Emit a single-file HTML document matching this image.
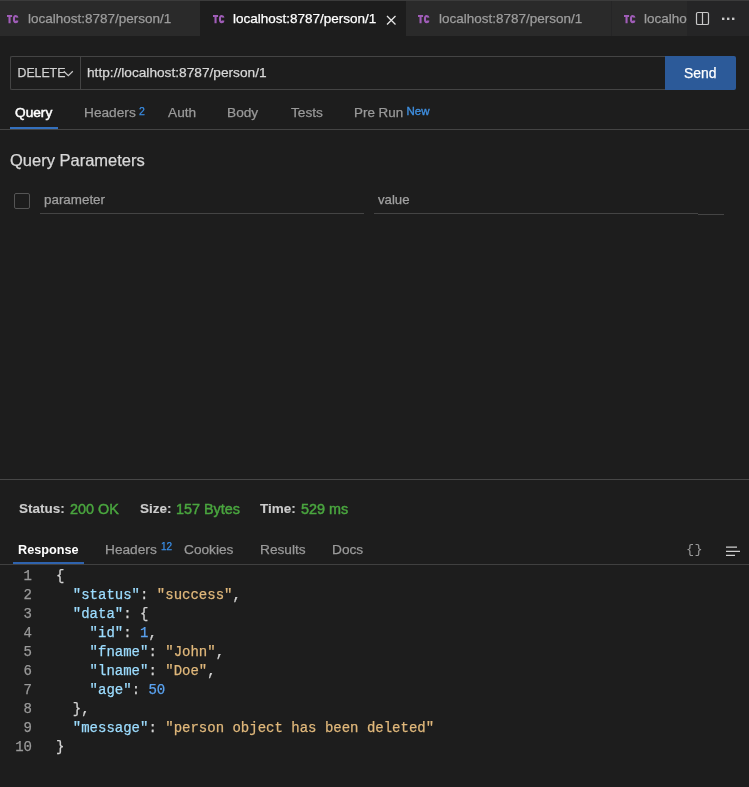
<!DOCTYPE html>
<html><head><meta charset="utf-8">
<style>
*{margin:0;padding:0;box-sizing:border-box}
html,body{width:749px;height:787px;overflow:hidden;background:#1d1d1d;font-family:"Liberation Sans",sans-serif;}
#root{position:absolute;left:0;top:0;width:749px;height:787px;will-change:transform}
#root span{-webkit-text-stroke:0.25px currentColor}
.code span{-webkit-text-stroke:0.3px currentColor}
#root .st{-webkit-text-stroke:0.45px currentColor}
.a{position:absolute;white-space:nowrap}
#tabbar{position:absolute;left:0;top:0;width:749px;height:36px;background:#252526}
#topline{position:absolute;left:0;top:0;width:749px;height:1px;background:#3b3b3b}
.tab{position:absolute;top:1px;height:35px;background:#2a2a2a;overflow:hidden}
.tab.act{background:#1d1d1d;height:36px}
.tcs{position:absolute;top:14px}
.tc{position:absolute;top:13px;font-weight:bold;font-size:11px;line-height:11px;color:#a25ec2;transform:scaleX(0.8);transform-origin:0 0;letter-spacing:0px}
.tt{position:absolute;top:10px;font-size:13.5px;line-height:16px;color:#9d9d9d}
.act .tt{color:#ffffff}
.rt{position:absolute;font-size:13.7px;line-height:16px;color:#9a9a9a;top:105px}
.sup{position:absolute;font-size:10px;line-height:11px;color:#3a8ee6}
.st{position:absolute;top:501px;font-size:14.4px;line-height:16px;color:#cccccc}
.gv{color:#4aa63f}
.code{position:absolute;left:0;top:567px;font-family:"Liberation Mono",monospace;font-size:14px;line-height:19px}
.ln{position:absolute;left:0;width:32px;text-align:right;color:#9a9a9a}
.cl{position:absolute;left:56px;color:#d4d4d4;white-space:pre}
.k{color:#9cdcfe}.s{color:#e0b87b}.n{color:#5aa2f0}
</style></head><body><div id="root">
<div id="tabbar">
  <div class="tab" style="left:0;width:200px"><svg class="tcs" style="left:7px" width="13" height="9" viewBox="0 0 13 9"><path d="M0 0H5.1V2H3.6V8.2H1.5V2H0Z" fill="#a05db8"/><path d="M10.5 2.7C10.3 1.5 9.7 1.05 8.7 1.05C7.5 1.05 6.95 2 6.95 4.1C6.95 6.2 7.5 7.15 8.7 7.15C9.7 7.15 10.3 6.7 10.5 5.5" fill="none" stroke="#a05db8" stroke-width="2.1"/></svg><span class="tt" style="left:28px">localhost:8787/person/1</span></div>
  <div class="tab act" style="left:200px;width:206px"><svg class="tcs" style="left:13px" width="13" height="9" viewBox="0 0 13 9"><path d="M0 0H5.1V2H3.6V8.2H1.5V2H0Z" fill="#a05db8"/><path d="M10.5 2.7C10.3 1.5 9.7 1.05 8.7 1.05C7.5 1.05 6.95 2 6.95 4.1C6.95 6.2 7.5 7.15 8.7 7.15C9.7 7.15 10.3 6.7 10.5 5.5" fill="none" stroke="#a05db8" stroke-width="2.1"/></svg><span class="tt" style="left:33px">localhost:8787/person/1</span>
    <svg class="a" style="left:186px;top:14px" width="11" height="10" viewBox="0 0 11 10"><path d="M1 1L9.5 9.5M9.5 1L1 9.5" stroke="#e6e6e6" stroke-width="1.3"/></svg></div>
  <div class="tab" style="left:406px;width:205px"><svg class="tcs" style="left:12px" width="13" height="9" viewBox="0 0 13 9"><path d="M0 0H5.1V2H3.6V8.2H1.5V2H0Z" fill="#a05db8"/><path d="M10.5 2.7C10.3 1.5 9.7 1.05 8.7 1.05C7.5 1.05 6.95 2 6.95 4.1C6.95 6.2 7.5 7.15 8.7 7.15C9.7 7.15 10.3 6.7 10.5 5.5" fill="none" stroke="#a05db8" stroke-width="2.1"/></svg><span class="tt" style="left:33px">localhost:8787/person/1</span></div>
  <div class="tab" style="left:612px;width:75px"><svg class="tcs" style="left:12px" width="13" height="9" viewBox="0 0 13 9"><path d="M0 0H5.1V2H3.6V8.2H1.5V2H0Z" fill="#a05db8"/><path d="M10.5 2.7C10.3 1.5 9.7 1.05 8.7 1.05C7.5 1.05 6.95 2 6.95 4.1C6.95 6.2 7.5 7.15 8.7 7.15C9.7 7.15 10.3 6.7 10.5 5.5" fill="none" stroke="#a05db8" stroke-width="2.1"/></svg><span class="tt" style="left:32px">localhost:8787/person/1</span></div>
  <svg class="a" style="left:695px;top:11px" width="15" height="15" viewBox="0 0 15 15"><rect x="1.5" y="1.5" width="12" height="12" rx="1.3" fill="none" stroke="#c8c8c8" stroke-width="1.2"/><path d="M7.5 1.5V13.5" stroke="#c8c8c8" stroke-width="1.2"/></svg>
  <svg class="a" style="left:721px;top:16px" width="14" height="5" viewBox="0 0 14 5"><rect x="1" y="1.6" width="2.4" height="2.4" fill="#c8c8c8"/><rect x="6" y="1.6" width="2.4" height="2.4" fill="#c8c8c8"/><rect x="11" y="1.6" width="2.4" height="2.4" fill="#c8c8c8"/></svg>
</div>
<div id="topline"></div>

<!-- URL bar -->
<div class="a" style="left:10px;top:56px;width:656px;height:34px;border:1px solid #444;border-right:none;border-radius:2px 0 0 2px"></div>
<div class="a" style="left:80px;top:56px;width:1px;height:34px;background:#444"></div>
<span class="a" style="left:17.5px;top:66px;font-size:12.3px;line-height:15px;color:#d0d0d0">DELETE</span>
<svg class="a" style="left:63px;top:70px" width="11" height="7" viewBox="0 0 11 7"><path d="M0.8 1.2L5.3 5.7L9.8 1.2" fill="none" stroke="#c8c8c8" stroke-width="1.25"/></svg>
<span class="a" style="left:87px;top:65px;font-size:13.7px;line-height:16px;color:#d8d8d8">http://localhost:8787/person/1</span>
<div class="a" style="left:665px;top:56px;width:71px;height:34px;background:#2c5a99;border-radius:0 2px 2px 0"></div>
<span class="a" style="left:684px;top:65px;font-size:13.9px;line-height:16px;color:#ffffff">Send</span>

<!-- request tabs -->
<span class="rt" style="left:15px;color:#ffffff;-webkit-text-stroke:0.5px #fff">Query</span>
<span class="rt" style="left:84px">Headers</span><span class="sup" style="left:139px;top:105.5px;font-size:10.5px">2</span>
<span class="rt" style="left:168px">Auth</span>
<span class="rt" style="left:227px">Body</span>
<span class="rt" style="left:291px">Tests</span>
<span class="rt" style="left:354px;font-size:13.4px">Pre Run</span><span class="sup" style="left:406.5px;top:105.5px;font-size:11.5px;color:#3f8fe0;-webkit-text-stroke:0.35px #3f8fe0">New</span>
<div class="a" style="left:0;top:129px;width:749px;height:1px;background:#444"></div>
<div class="a" style="left:10px;top:127px;width:48px;height:2px;background:#3470bd"></div>

<span class="a" style="left:10px;top:151px;font-size:16.5px;line-height:19px;color:#d8d8d8">Query Parameters</span>
<div class="a" style="left:14px;top:193px;width:16px;height:16px;border:1px solid #555;border-radius:2px"></div>
<span class="a" style="left:44px;top:192px;font-size:13.4px;line-height:16px;color:#a0a0a0">parameter</span>
<div class="a" style="left:40px;top:213px;width:324px;height:1px;background:#444"></div>
<span class="a" style="left:378px;top:192px;font-size:13.2px;line-height:16px;color:#a0a0a0">value</span>
<div class="a" style="left:374px;top:213px;width:324px;height:1px;background:#444"></div>
<div class="a" style="left:698px;top:214px;width:26px;height:1px;background:#444"></div>

<!-- response -->
<div class="a" style="left:0;top:479px;width:749px;height:1px;background:#474747"></div>
<span class="st" style="left:19px;font-weight:bold;font-size:13.5px;-webkit-text-stroke:0.1px #ccc">Status:</span><span class="st gv" style="left:70px">200 OK</span>
<span class="st" style="left:140px;font-weight:bold;font-size:13.5px;-webkit-text-stroke:0.1px #ccc">Size:</span><span class="st gv" style="left:176px">157 Bytes</span>
<span class="st" style="left:260px;font-weight:bold;font-size:13.5px;-webkit-text-stroke:0.1px #ccc">Time:</span><span class="st gv" style="left:301px">529 ms</span>

<span class="rt" style="left:18px;top:542px;color:#fff;font-weight:bold;font-size:12.7px;-webkit-text-stroke:0">Response</span>
<span class="rt" style="left:105px;top:542px">Headers</span><span class="sup" style="left:161px;top:541px">12</span>
<span class="rt" style="left:184px;top:542px">Cookies</span>
<span class="rt" style="left:260px;top:542px">Results</span>
<span class="rt" style="left:332px;top:542px">Docs</span>
<span class="a" style="left:686px;top:542px;font-family:'Liberation Mono',monospace;font-size:13.5px;line-height:16px;color:#9a9a9a;-webkit-text-stroke:0">{</span><span class="a" style="left:694.5px;top:542px;font-family:'Liberation Mono',monospace;font-size:13.5px;line-height:16px;color:#9a9a9a;-webkit-text-stroke:0">}</span>
<svg class="a" style="left:725px;top:546px" width="16" height="11" viewBox="0 0 16 11"><path d="M1 1.2H12M1 5.4H15M1 9.3H10" stroke="#d0d0d0" stroke-width="1.3"/></svg>
<div class="a" style="left:0;top:564px;width:749px;height:1px;background:#404040"></div>
<div class="a" style="left:13px;top:562px;width:71px;height:2px;background:#2f63ae"></div>

<div class="code">
<span class="ln" style="top:0">1</span><span class="cl" style="top:0">{</span>
<span class="ln" style="top:19px">2</span><span class="cl" style="top:19px">  <span class="k">"status"</span>: <span class="s">"success"</span>,</span>
<span class="ln" style="top:38px">3</span><span class="cl" style="top:38px">  <span class="k">"data"</span>: {</span>
<span class="ln" style="top:57px">4</span><span class="cl" style="top:57px">    <span class="k">"id"</span>: <span class="n">1</span>,</span>
<span class="ln" style="top:76px">5</span><span class="cl" style="top:76px">    <span class="k">"fname"</span>: <span class="s">"John"</span>,</span>
<span class="ln" style="top:95px">6</span><span class="cl" style="top:95px">    <span class="k">"lname"</span>: <span class="s">"Doe"</span>,</span>
<span class="ln" style="top:114px">7</span><span class="cl" style="top:114px">    <span class="k">"age"</span>: <span class="n">50</span></span>
<span class="ln" style="top:133px">8</span><span class="cl" style="top:133px">  },</span>
<span class="ln" style="top:152px">9</span><span class="cl" style="top:152px">  <span class="k">"message"</span>: <span class="s">"person object has been deleted"</span></span>
<span class="ln" style="top:171px">10</span><span class="cl" style="top:171px">}</span>
</div>
</div></body></html>
